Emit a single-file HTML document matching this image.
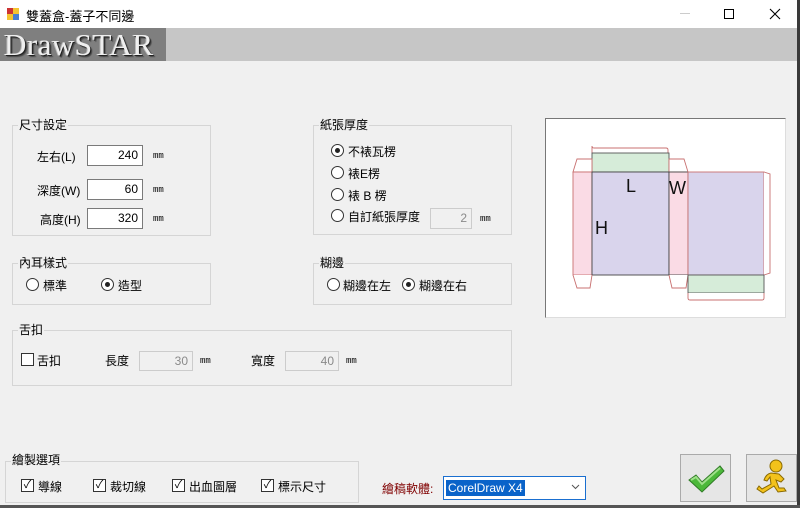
<!DOCTYPE html>
<html><head><meta charset="utf-8"><style>
*{margin:0;padding:0;box-sizing:border-box}
body{width:800px;height:508px;overflow:hidden;background:#f0f0f0;position:relative;font-family:"Liberation Sans","Noto Sans CJK TC",sans-serif;font-size:12px;color:#000}
.a{position:absolute;white-space:nowrap}
.g{position:absolute;border:1px solid #d5d5d5}
.lbl{position:absolute;background:#f0f0f0;padding:0 1px;font-size:12px;line-height:14px}
.in{position:absolute;background:#fff;border:1px solid #7a7a7a;text-align:right;padding-right:4px;font-size:12px;line-height:18px}
.dis{background:#f0f0f0;border-color:#ccc;color:#8a8a8a}
.mm{position:absolute;font-size:9px;font-family:"Liberation Mono",monospace}
.r{position:absolute;width:13px;height:13px;border:1px solid #333;border-radius:50%;background:#fff}
.r.on::after{content:"";position:absolute;left:3px;top:3px;width:5px;height:5px;border-radius:50%;background:#222}
.c{position:absolute;width:13px;height:13px;border:1px solid #333;background:#fff;font-size:11px;line-height:11px;text-align:center}
</style></head><body>
<div class="a" style="left:0;top:0;width:800px;height:28px;background:#fff"></div>
<div class="a" style="left:7px;top:8px;width:12px;height:12px">
<div style="position:absolute;left:0;top:0;width:6px;height:6px;background:#c33"></div>
<div style="position:absolute;left:6px;top:0;width:6px;height:6px;background:#f4c430"></div>
<div style="position:absolute;left:0;top:6px;width:6px;height:6px;background:#f4c430"></div>
<div style="position:absolute;left:6px;top:6px;width:6px;height:6px;background:#4a7fd0"></div></div>
<div class="a" style="left:26px;top:6px;font-size:13px">雙蓋盒-蓋子不同邊</div>
<div class="a" style="left:680px;top:13px;width:10px;height:1px;background:#ccc"></div>
<div class="a" style="left:724px;top:9px;width:10px;height:10px;border:1px solid #000"></div>
<svg class="a" style="left:769px;top:8px" width="12" height="12"><path d="M1 1L11 11M11 1L1 11" stroke="#000" stroke-width="1.1"/></svg>
<div class="a" style="left:0;top:28px;width:797px;height:33px;background:#c6c6c6"></div>
<div class="a" style="left:0;top:28px;width:166px;height:33px;background:#7f7f7f"></div>
<div class="a" style="left:4px;top:28px;font-family:'Liberation Serif',serif;font-size:31px;line-height:33px;color:#eee;letter-spacing:0.5px;text-shadow:1px 1px 0 #222,2px 2px 1px #444,-1px 0 0 #bbb">DrawSTAR</div>
<div class="a" style="left:797px;top:0;width:3px;height:508px;background:#3a3a3a"></div>

<div class="g" style="left:12px;top:125px;width:199px;height:111px"></div>
<div class="lbl" style="left:18px;top:118px">尺寸設定</div>
<div class="a" style="left:37px;top:148px">左右(L)</div>
<div class="a" style="left:37px;top:182px">深度(W)</div>
<div class="a" style="left:40px;top:211px">高度(H)</div>
<div class="in" style="left:87px;top:145px;width:56px;height:21px">240</div>
<div class="in" style="left:87px;top:179px;width:56px;height:21px">60</div>
<div class="in" style="left:87px;top:208px;width:56px;height:21px">320</div>
<div class="mm" style="left:153px;top:151px">mm</div>
<div class="mm" style="left:153px;top:185px">mm</div>
<div class="mm" style="left:153px;top:214px">mm</div>

<div class="g" style="left:313px;top:125px;width:199px;height:110px"></div>
<div class="lbl" style="left:319px;top:118px">紙張厚度</div>
<div class="r on" style="left:331px;top:144px"></div><div class="a" style="left:348px;top:143px">不裱瓦楞</div>
<div class="r" style="left:331px;top:166px"></div><div class="a" style="left:348px;top:165px">裱E楞</div>
<div class="r" style="left:331px;top:188px"></div><div class="a" style="left:348px;top:187px">裱 B 楞</div>
<div class="r" style="left:331px;top:209px"></div><div class="a" style="left:348px;top:208px">自訂紙張厚度</div>
<div class="in dis" style="left:430px;top:208px;width:42px;height:21px">2</div>
<div class="mm" style="left:480px;top:214px">mm</div>

<div class="g" style="left:12px;top:263px;width:199px;height:42px"></div>
<div class="lbl" style="left:18px;top:256px">內耳樣式</div>
<div class="r" style="left:26px;top:278px"></div><div class="a" style="left:43px;top:277px">標準</div>
<div class="r on" style="left:101px;top:278px"></div><div class="a" style="left:118px;top:277px">造型</div>

<div class="g" style="left:313px;top:263px;width:199px;height:42px"></div>
<div class="lbl" style="left:319px;top:256px">糊邊</div>
<div class="r" style="left:327px;top:278px"></div><div class="a" style="left:343px;top:277px">糊邊在左</div>
<div class="r on" style="left:402px;top:278px"></div><div class="a" style="left:419px;top:277px">糊邊在右</div>

<div class="g" style="left:12px;top:330px;width:500px;height:56px"></div>
<div class="lbl" style="left:18px;top:323px">舌扣</div>
<div class="c" style="left:21px;top:353px"></div><div class="a" style="left:37px;top:352px">舌扣</div>
<div class="a" style="left:105px;top:352px">長度</div>
<div class="in dis" style="left:139px;top:351px;width:54px;height:20px">30</div>
<div class="mm" style="left:200px;top:356px">mm</div>
<div class="a" style="left:251px;top:352px">寬度</div>
<div class="in dis" style="left:285px;top:351px;width:54px;height:20px">40</div>
<div class="mm" style="left:346px;top:356px">mm</div>

<div class="a" style="left:545px;top:118px;width:241px;height:200px;background:#fff;border:1px solid #777;border-right-color:#ddd;border-bottom-color:#ddd"></div>
<svg class="a" style="left:545px;top:118px" width="241" height="200">
<g stroke-width="0.9">
<path d="M47 35L47 28Q47 30 49 30L121 30Q123 30 123 32L123 41" fill="#fff" stroke="#c87070"/>
<rect x="47" y="35" width="77" height="19" fill="#d6ecd9" stroke="#555"/>
<path d="M28 54L32 41L47 41L47 54Z" fill="#fff" stroke="#c87070"/>
<path d="M124 54L124 41L139 41L143 54Z" fill="#fff" stroke="#c87070"/>
<rect x="28" y="54" width="19" height="103" fill="#fadbe5" stroke="#c87070"/>
<rect x="47" y="54" width="77" height="103" fill="#d9d4ec" stroke="#444"/>
<rect x="124" y="54" width="19" height="103" fill="#fadbe5" stroke="#444"/>
<rect x="143" y="54" width="76" height="103" fill="#d9d4ec" stroke="#c87070"/>
<path d="M219 54L225 56L225 155L219 157" fill="#fff" stroke="#c87070"/>
<path d="M28 157L32 170L45 170L47 157" fill="#fff" stroke="#c87070"/>
<path d="M124 157L127 170L141 170L143 157" fill="#fff" stroke="#c87070"/>
<rect x="143" y="157" width="76" height="18" fill="#d6ecd9" stroke="#555"/>
<path d="M143 175L143 180Q143 182 145 182L217 182Q219 182 219 180L219 175" fill="#fff" stroke="#c87070"/>
</g>
<text x="81" y="74" font-family="Liberation Sans" font-size="18" fill="#111">L</text>
<text x="124" y="76" font-family="Liberation Sans" font-size="18" fill="#111">W</text>
<text x="50" y="116" font-family="Liberation Sans" font-size="18" fill="#111">H</text>
</svg>

<div class="g" style="left:5px;top:461px;width:354px;height:42px"></div>
<div class="lbl" style="left:11px;top:453px">繪製選項</div>
<div class="c" style="left:21px;top:479px">✓</div><div class="a" style="left:38px;top:478px">導線</div>
<div class="c" style="left:93px;top:479px">✓</div><div class="a" style="left:110px;top:478px">裁切線</div>
<div class="c" style="left:172px;top:479px">✓</div><div class="a" style="left:189px;top:478px">出血圖層</div>
<div class="c" style="left:261px;top:479px">✓</div><div class="a" style="left:278px;top:478px">標示尺寸</div>
<div class="a" style="left:382px;top:480px;color:#800000">繪稿軟體:</div>
<div class="a" style="left:443px;top:476px;width:143px;height:24px;background:#fff;border:1px solid #1a6fd0"></div>
<div class="a" style="left:446px;top:480px;height:16px;padding:0 2px;background:#0a63c9;color:#fff;font-size:12px;line-height:16px">CorelDraw X4</div>
<svg class="a" style="left:571px;top:484px" width="9" height="6"><path d="M1 1L4.5 4.5L8 1" stroke="#555" fill="none"/></svg>

<div class="a" style="left:680px;top:454px;width:51px;height:48px;border:1px solid #aaa;background:#e6e6e6"></div>
<svg class="a" style="left:686px;top:463px" width="40" height="32"><path d="M3 17L10 12L16 19L34 3L38 8L16 29Z" fill="#4cb83a" stroke="#2f7a25" stroke-width="1"/><path d="M5 17L10 14L16 21L34 5" stroke="#9fe08a" stroke-width="2" fill="none"/></svg>
<div class="a" style="left:746px;top:454px;width:51px;height:48px;border:1px solid #aaa;background:#e6e6e6"></div>
<svg class="a" style="left:754px;top:458px" width="36" height="40"><ellipse cx="22" cy="8" rx="6" ry="6" fill="#f3c21b" stroke="#8a6a00"/><path d="M17 15Q12 16 10 22L13 23L16 19L17 26L8 31L5 28L3 31L9 35L20 28L24 34L32 33L30 30L25 30L22 22L27 24L30 21L25 16Z" fill="#f3c21b" stroke="#8a6a00"/></svg>
<div class="a" style="left:0;top:505px;width:800px;height:3px;background:#555"></div>
</body></html>
